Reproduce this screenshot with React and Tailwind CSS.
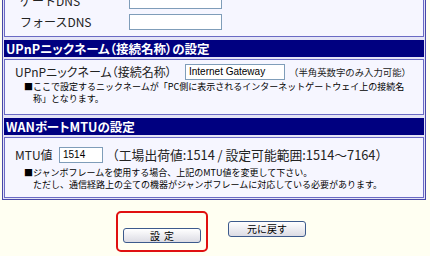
import React from "react";

const FONT = { fontFamily: '"Noto Sans CJK JP", "Liberation Sans", sans-serif' };

function TextBox({ value = "", className = "" }) {
  return (
    <div
      className={
        "h-[16px] border border-[#7f9db9] bg-white px-[3px] text-[10px] leading-[14px] text-black " +
        className
      }
    >
      {value}
    </div>
  );
}

function SectionHead({ children }) {
  return (
    <div className="mt-[3px] h-[17px] bg-[#000080] pl-[2px] text-[12.5px] font-bold leading-[17px] text-white [font-feature-settings:'palt']">
      {children}
    </div>
  );
}

function Box({ className = "", children }) {
  return (
    <div className={"border border-[#6a6ac4] bg-[#f6f6ff] " + className}>
      {children}
    </div>
  );
}

function Note({ lines, className = "" }) {
  return (
    <div className={"flex pl-[19px] text-[9px] leading-[12px] text-black " + className}>
      <span className="w-[9px] shrink-0">■</span>
      <div className="whitespace-nowrap">
        {lines.map((l) => (
          <div key={l}>{l}</div>
        ))}
      </div>
    </div>
  );
}

export default function App() {
  return (
    <div className="h-[256px] w-[430px] overflow-hidden bg-[#fffff2]" style={FONT}>
      <div className="ml-[2px] mt-[-16px] w-[424px] border border-[#4848a8] bg-[#e4e4f6] p-[1px] flex flex-col">
        <Box className="pt-[3px] pb-[4px]">
          <div className="flex h-[21px] items-center">
            <span className="w-[124px] pl-[15px] text-[12px] text-[#222]">ゲートDNS</span>
            <TextBox className="w-[93px]" />
          </div>
          <div className="flex h-[21px] items-center">
            <span className="w-[124px] pl-[15px] text-[12px] text-[#222]">フォースDNS</span>
            <TextBox className="w-[93px]" />
          </div>
        </Box>

        <SectionHead>UPnPニックネーム（接続名称）の設定</SectionHead>

        <Box className="mt-[2px] pt-[3px] pb-[9px]">
          <div className="flex h-[18px] items-center text-[12px] text-[#222] [font-feature-settings:'palt']">
            <span className="w-[180px] pl-[10px]">UPnPニックネーム（接続名称）</span>
            <TextBox className="w-[100px] font-['Liberation_Sans']" value="Internet Gateway" />
            <span className="pl-[4px] text-[9.4px] [font-feature-settings:normal]">（半角英数字のみ入力可能）</span>
          </div>
          <Note
            lines={[
              "ここで設定するニックネームが「PC側に表示されるインターネットゲートウェイ上の接続名",
              "称」となります。",
            ]}
          />
        </Box>

        <SectionHead>WANポートMTUの設定</SectionHead>

        <Box className="mt-[2px] pt-[7px] pb-[6px]">
          <div className="flex h-[20px] items-center text-[#222]">
            <span className="w-[54px] pl-[10px] text-[12px] [font-feature-settings:'palt']">MTU値</span>
            <TextBox className="w-[44px] font-['Liberation_Sans']" value="1514" />
            <span className="pl-[3px] text-[12.8px]">（工場出荷値:1514 / 設定可能範囲:1514〜7164）</span>
          </div>
          <Note
            className="mt-[2px]"
            lines={[
              "ジャンボフレームを使用する場合、上記のMTU値を変更して下さい。",
              "ただし、通信経路上の全ての機器がジャンボフレームに対応している必要があります。",
            ]}
          />
        </Box>
      </div>

      <div className="mt-[11px] ml-[116px] flex items-start gap-[20px]">
        <div className="rounded-[5px] border-2 border-[#e01010] px-[5px] pt-[8px] pb-[5px]">
          <button className="h-[15px] w-[78px] rounded-[3px] border border-[#3c5a8c] bg-gradient-to-b from-white to-[#dcdce4] pl-[4px] text-[10px] leading-[13px] tracking-[4px] text-black">
            設定
          </button>
        </div>
        <button className="mt-[10px] h-[16px] w-[78px] rounded-[3px] border border-[#3c5a8c] bg-gradient-to-b from-white to-[#dcdce4] text-[10px] leading-[14px] text-black">
          元に戻す
        </button>
      </div>
    </div>
  );
}
